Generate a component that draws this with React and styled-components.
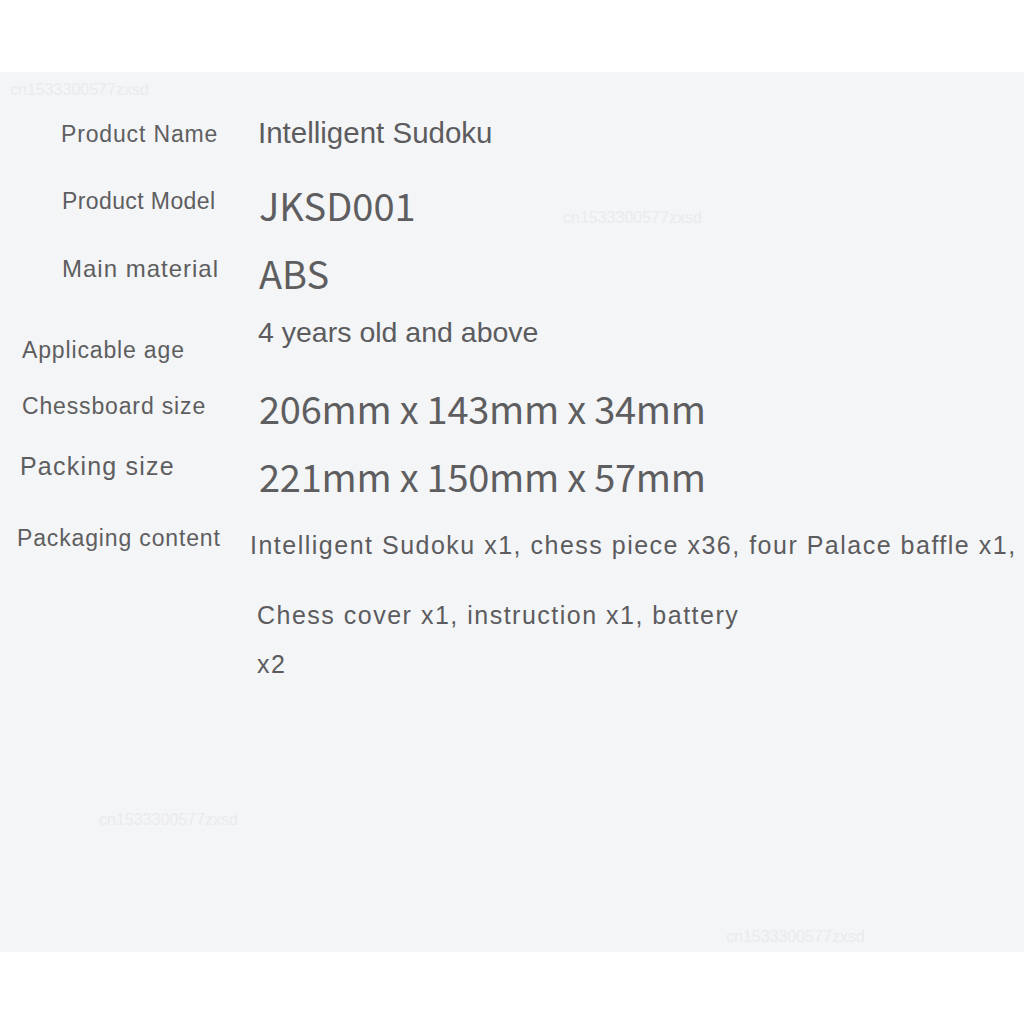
import React from "react";
import styled, { createGlobalStyle } from "styled-components";

const Global = createGlobalStyle`
  html, body { margin: 0; padding: 0; background: #ffffff; }
  body { font-family: "Liberation Sans", Arial, sans-serif; }
`;

const Page = styled.div`
  width: 1024px;
  height: 1024px;
  background: #ffffff;
  padding-top: 72px;
  box-sizing: border-box;
`;

const Panel = styled.section`
  position: relative;
  height: 880px;
  background: #f4f5f7;
  padding-top: 28px;
  box-sizing: border-box;
  overflow: hidden;
`;

const Row = styled.div`
  display: grid;
  grid-template-columns: 250px 1fr;
  align-items: start;
  height: ${(p) => p.$h}px;
`;

const Label = styled.div`
  margin-top: ${(p) => p.$dy}px;
  padding-left: ${(p) => p.$dx}px;
  font-family: "Liberation Sans", Arial, sans-serif;
  font-size: ${(p) => p.$fs || 23}px;
  letter-spacing: ${(p) => p.$ls ?? 0.85}px;
  line-height: 1.2;
  color: #5e5e60;
  white-space: nowrap;
`;

const Values = styled.div`
  display: flex;
  flex-direction: column;
  align-items: flex-start;
`;

const Value = styled.div`
  margin-top: ${(p) => p.$dy}px;
  padding-left: ${(p) => p.$dx || 0}px;
  font-family: "Liberation Sans", Arial, sans-serif;
  font-size: ${(p) => p.$fs}px;
  letter-spacing: ${(p) => p.$ls || 0}px;
  line-height: 1.2;
  color: #5c5c5e;
  white-space: nowrap;
`;

const BigValue = styled(Value)`
  font-family: "Noto Sans CJK SC", "Noto Sans", sans-serif;
  color: #5e5e60;
`;

const Watermark = styled.span`
  position: absolute;
  left: ${(p) => p.$x}px;
  top: ${(p) => p.$y}px;
  font-family: "Liberation Sans", Arial, sans-serif;
  font-size: 16px;
  line-height: 1;
  color: #eaebed;
  white-space: nowrap;
  pointer-events: none;
`;

export default function App() {
  return (
    <>
      <Global />
      <Page>
        <Panel>
          <Watermark $x={10} $y={10}>cn1533300577zxsd</Watermark>
          <Watermark $x={563} $y={138}>cn1533300577zxsd</Watermark>
          <Watermark $x={99} $y={740}>cn1533300577zxsd</Watermark>
          <Watermark $x={726} $y={857}>cn1533300577zxsd</Watermark>

          <Row $h={70}>
            <Label $dx={61} $dy={21}>Product Name</Label>
            <Values>
              <Value $dx={8} $dy={15} $fs={29.5}>Intelligent Sudoku</Value>
            </Values>
          </Row>

          <Row $h={70}>
            <Label $dx={62} $dy={18} $ls={0.4}>Product Model</Label>
            <Values>
              <BigValue $dx={9} $dy={12} $fs={38}>JKSD001</BigValue>
            </Values>
          </Row>

          <Row $h={60}>
            <Label $dx={62} $dy={15} $fs={24} $ls={1}>Main material</Label>
            <Values>
              <BigValue $dx={9} $dy={10} $fs={38}>ABS</BigValue>
            </Values>
          </Row>

          <Row $h={80}>
            <Label $dx={22} $dy={37}>Applicable age</Label>
            <Values>
              <Value $dx={8} $dy={15} $fs={28.5}>4 years old and above</Value>
            </Values>
          </Row>

          <Row $h={60}>
            <Label $dx={22} $dy={13}>Chessboard size</Label>
            <Values>
              <BigValue $dx={9} $dy={5} $fs={38} $ls={-0.25}>206mm x 143mm x 34mm</BigValue>
            </Values>
          </Row>

          <Row $h={70}>
            <Label $dx={20} $dy={11} $fs={25} $ls={1.2}>Packing size</Label>
            <Values>
              <BigValue $dx={9} $dy={13} $fs={38} $ls={-0.25}>221mm x 150mm x 57mm</BigValue>
            </Values>
          </Row>

          <Row $h={200}>
            <Label $dx={17} $dy={15}>Packaging content</Label>
            <Values>
              <Value $dx={0} $dy={20} $fs={25} $ls={1.5}>
                Intelligent Sudoku x1, chess piece x36, four Palace baffle x1,
              </Value>
              <Value $dx={7} $dy={39.5} $fs={25} $ls={1.5}>
                Chess cover x1, instruction x1, battery
              </Value>
              <Value $dx={7} $dy={19} $fs={25} $ls={1.5}>x2</Value>
            </Values>
          </Row>
        </Panel>
      </Page>
    </>
  );
}
